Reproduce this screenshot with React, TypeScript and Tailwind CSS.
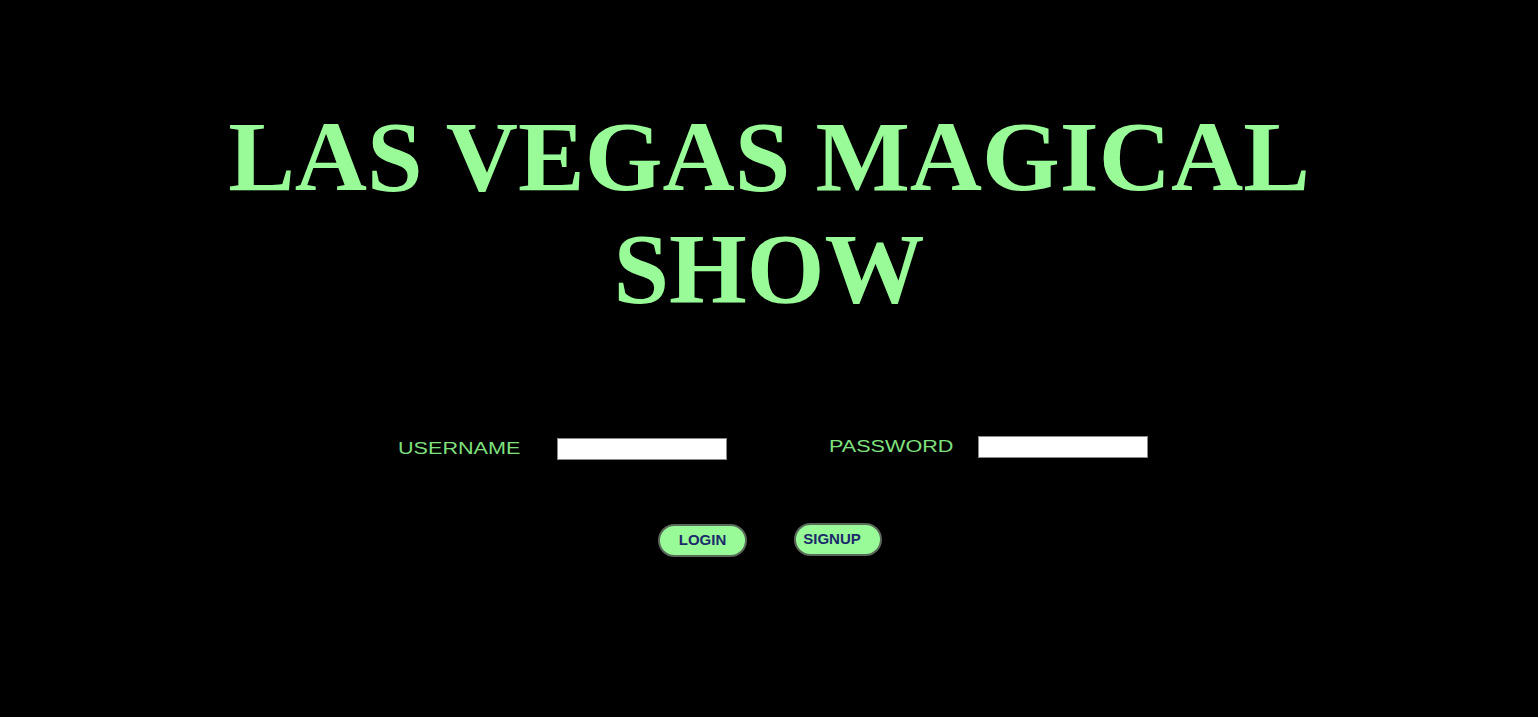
import React from "react";

export default function App() {
  const labelCls =
    "inline-block origin-left scale-x-[1.35] whitespace-nowrap text-[16px] text-[#7fe07f]";
  return (
    <div className="min-h-screen w-full bg-black flex flex-col items-center overflow-hidden">
      <h1
        className="mt-[101px] text-center text-[100px] font-bold leading-[112px] text-[#98fb98] w-[1200px]"
        style={{ fontFamily: '"Liberation Serif", "Times New Roman", serif' }}
      >
        LAS VEGAS MAGICAL
        <br />
        SHOW
      </h1>

      <div
        className="mt-[110px] flex items-center ml-[8px]"
        style={{ fontFamily: '"Liberation Sans", Arial, sans-serif' }}
      >
        <div className="w-[123px]">
          <label className={labelCls}>USERNAME</label>
        </div>
        <input
          type="text"
          className="ml-[36px] w-[170px] h-[22px] bg-white border border-[#8a8a8a] outline-none"
        />
        <div className="ml-[102px] flex items-center mb-[4px]">
          <div className="w-[128px]">
            <label className={labelCls}>PASSWORD</label>
          </div>
          <input
            type="password"
            className="ml-[21px] w-[170px] h-[22px] bg-white border border-[#8a8a8a] outline-none"
          />
        </div>
      </div>

      <div
        className="mt-[61px] flex items-center gap-[47px] ml-[2px]"
        style={{ fontFamily: '"Liberation Sans", Arial, sans-serif' }}
      >
        <button className="w-[89px] h-[33px] rounded-full bg-[#98fb98] border-2 border-[#5a6a5a] text-[15px] font-bold text-[#1b2a6b] flex items-center justify-center">
          LOGIN
        </button>
        <button className="w-[88px] h-[33px] rounded-full bg-[#98fb98] border-2 border-[#5a6a5a] text-[15px] font-bold text-[#1b2a6b] flex items-center justify-center pr-[12px] -mt-[2px]">
          SIGNUP
        </button>
      </div>
    </div>
  );
}
